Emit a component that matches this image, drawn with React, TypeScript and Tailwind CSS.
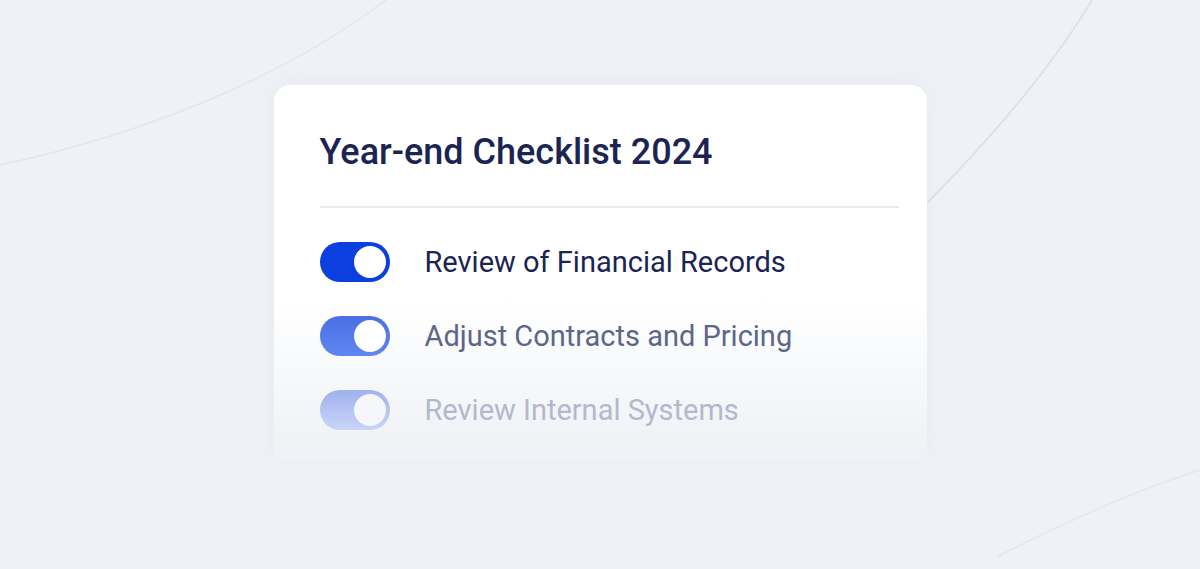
import React from "react";

const items = [
  {
    label: "Review of Financial Records",
    track: "bg-[#0b3fdf]",
    knob: "bg-white",
    text: "text-[#1b2452]",
  },
  {
    label: "Adjust Contracts and Pricing",
    track: "bg-gradient-to-b from-[#4a6fe3] to-[#5f86f2]",
    knob: "bg-white",
    text: "text-[#5c6689]",
  },
  {
    label: "Review Internal Systems",
    track: "bg-gradient-to-b from-[#9fb2ef] to-[#c9d5f8]",
    knob: "bg-[#f5f7fb]",
    text: "text-[#b3b9cc]",
  },
];

function Toggle({ track, knob }: { track: string; knob: string }) {
  return (
    <div className={`flex h-[40px] w-[70px] items-center justify-end rounded-full px-[4px] ${track}`}>
      <div className={`h-[32px] w-[32px] rounded-full ${knob}`} />
    </div>
  );
}

export default function App() {
  return (
    <div className="relative flex h-[569px] w-[1200px] justify-center overflow-hidden bg-[#eef1f5] font-['Roboto',sans-serif]">
      <svg className="absolute inset-0" width="1200" height="569" viewBox="0 0 1200 569" fill="none">
        <path d="M0 165 C 140 135, 280 80, 386 0" stroke="#e4e6ea" strokeWidth="1.5" />
        <path d="M1092 0 C 1050 70, 990 140, 920 210" stroke="#dcdfe5" strokeWidth="1.5" />
        <path d="M998 556 C 1060 525, 1130 492, 1200 470" stroke="#e5e7ec" strokeWidth="1.5" />
      </svg>

      <div className="relative mt-[85px] h-[375px] w-[653px] rounded-t-[16px] bg-gradient-to-b from-white from-[57%] to-[#eef1f5] pl-[46px] pr-[28px] pt-[45px] shadow-[0_-4px_24px_rgba(30,40,80,0.035)]">
        <h1 className="text-[36px] font-medium leading-[44px] text-[#1b2452]">Year-end Checklist 2024</h1>
        <div className="mt-[32px] h-[2px] bg-[#e9ebef]" />
        <div className="mt-[34px] flex flex-col gap-[34px]">
          {items.map((it) => (
            <div key={it.label} className="flex items-center gap-[35px]">
              <Toggle track={it.track} knob={it.knob} />
              <span className={`text-[29px] leading-[40px] ${it.text}`}>{it.label}</span>
            </div>
          ))}
        </div>
      </div>
    </div>
  );
}
